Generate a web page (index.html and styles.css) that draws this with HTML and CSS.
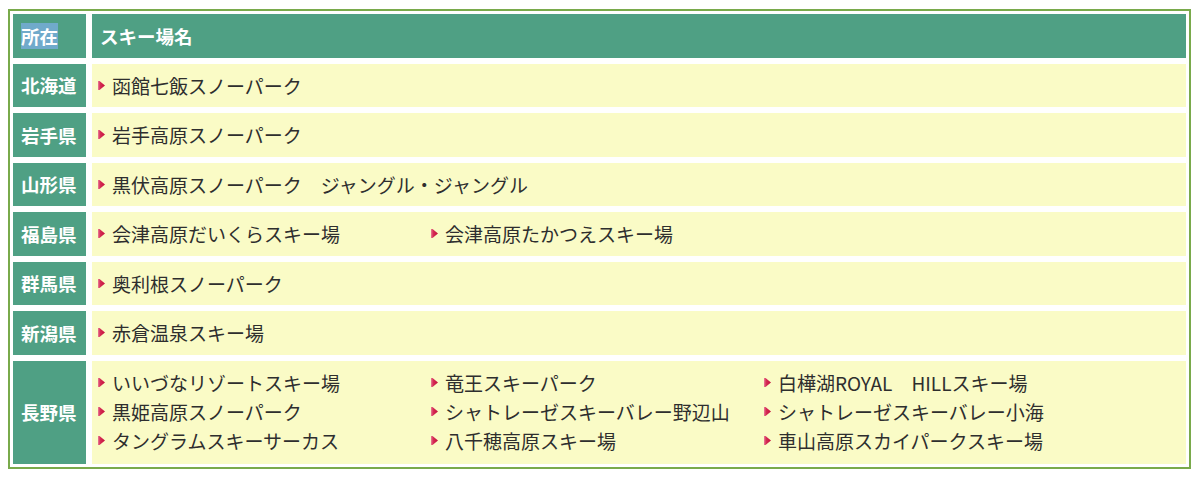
FILE: index.html
```html
<!DOCTYPE html>
<html lang="ja">
<head>
<meta charset="utf-8">
<title>スキー場一覧</title>
<link rel="stylesheet" href="styles.css">
</head>
<body>
<svg width="0" height="0" class="defs" aria-hidden="true">
  <defs>
    <linearGradient id="bg" x1="0" y1="0" x2="1" y2="0">
      <stop offset="0" stop-color="#e97f9a"/>
      <stop offset="0.3" stop-color="#d62d55"/>
      <stop offset="1" stop-color="#c3103c"/>
    </linearGradient>
    <symbol id="mk" viewBox="0 0 7 9">
      <polygon points="0,0 1.5,0 7,4.5 1.5,9 0,9" fill="url(#bg)"/>
    </symbol>
  </defs>
</svg>
<table class="ski">
  <tr>
    <th class="pref"><span class="sel">所在</span></th>
    <th class="name">スキー場名</th>
  </tr>
  <tr>
    <th class="pref">北海道</th>
    <td><div class="list"><span class="item"><svg class="mk"><use href="#mk"/></svg>函館七飯スノーパーク</span></div></td>
  </tr>
  <tr>
    <th class="pref">岩手県</th>
    <td><div class="list"><span class="item"><svg class="mk"><use href="#mk"/></svg>岩手高原スノーパーク</span></div></td>
  </tr>
  <tr>
    <th class="pref">山形県</th>
    <td><div class="list"><span class="item wide"><svg class="mk"><use href="#mk"/></svg>黒伏高原スノーパーク　ジャングル・ジャングル</span></div></td>
  </tr>
  <tr>
    <th class="pref">福島県</th>
    <td><div class="list"><span class="item"><svg class="mk"><use href="#mk"/></svg>会津高原だいくらスキー場</span><span class="item"><svg class="mk"><use href="#mk"/></svg>会津高原たかつえスキー場</span></div></td>
  </tr>
  <tr>
    <th class="pref">群馬県</th>
    <td><div class="list"><span class="item"><svg class="mk"><use href="#mk"/></svg>奥利根スノーパーク</span></div></td>
  </tr>
  <tr>
    <th class="pref">新潟県</th>
    <td><div class="list"><span class="item"><svg class="mk"><use href="#mk"/></svg>赤倉温泉スキー場</span></div></td>
  </tr>
  <tr class="tall">
    <th class="pref">長野県</th>
    <td><div class="list">
      <span class="item"><svg class="mk"><use href="#mk"/></svg>いいづなリゾートスキー場</span>
      <span class="item"><svg class="mk"><use href="#mk"/></svg>竜王スキーパーク</span>
      <span class="item"><svg class="mk"><use href="#mk"/></svg>白樺湖ROYAL　HILLスキー場</span>
      <span class="item"><svg class="mk"><use href="#mk"/></svg>黒姫高原スノーパーク</span>
      <span class="item"><svg class="mk"><use href="#mk"/></svg>シャトレーゼスキーバレー野辺山</span>
      <span class="item"><svg class="mk"><use href="#mk"/></svg>シャトレーゼスキーバレー小海</span>
      <span class="item"><svg class="mk"><use href="#mk"/></svg>タングラムスキーサーカス</span>
      <span class="item"><svg class="mk"><use href="#mk"/></svg>八千穂高原スキー場</span>
      <span class="item"><svg class="mk"><use href="#mk"/></svg>車山高原スカイパークスキー場</span>
    </div></td>
  </tr>
</table>
</body>
</html>
```
FILE: styles.css
```css
html, body {
  margin: 0;
  padding: 0;
  background: #ffffff;
}
body {
  padding: 9px 9px 0 8px;
  font-family: "Noto Sans CJK JP", "Noto Sans", sans-serif;
  color: #2e2e2e;
}
.defs {
  position: absolute;
  width: 0;
  height: 0;
}
.ski {
  width: 1183px;
  border: 2px solid #79aa4b;
  border-collapse: separate;
  border-spacing: 0;
}
.ski th,
.ski td {
  border: 3px solid #ffffff;
  padding: 0;
  box-sizing: border-box;
}
.ski tr {
  height: 49.5px;
}
.ski tr.tall {
  height: 109px;
}
.ski th {
  background: #4fa084;
  color: #ffffff;
  font-weight: bold;
  font-size: 18.5px;
  text-align: left;
  line-height: 26px;
}
.ski th.pref {
  width: 79px;
  padding-left: 8px;
}
.ski th.name {
  padding-left: 8px;
}
.sel {
  background: #70aacb;
}
.ski td {
  background: #fafbc6;
  font-size: 19px;
  padding-left: 6px;
}
.list {
  display: grid;
  grid-template-columns: repeat(3, 333px);
  line-height: 29px;
}
.tall .list {
  margin-top: -1px;
}
.item {
  display: flex;
  align-items: center;
  white-space: nowrap;
}
.item.wide {
  grid-column: span 3;
}
.mk {
  width: 7px;
  height: 9px;
  margin-right: 7px;
  flex: none;
}
```
